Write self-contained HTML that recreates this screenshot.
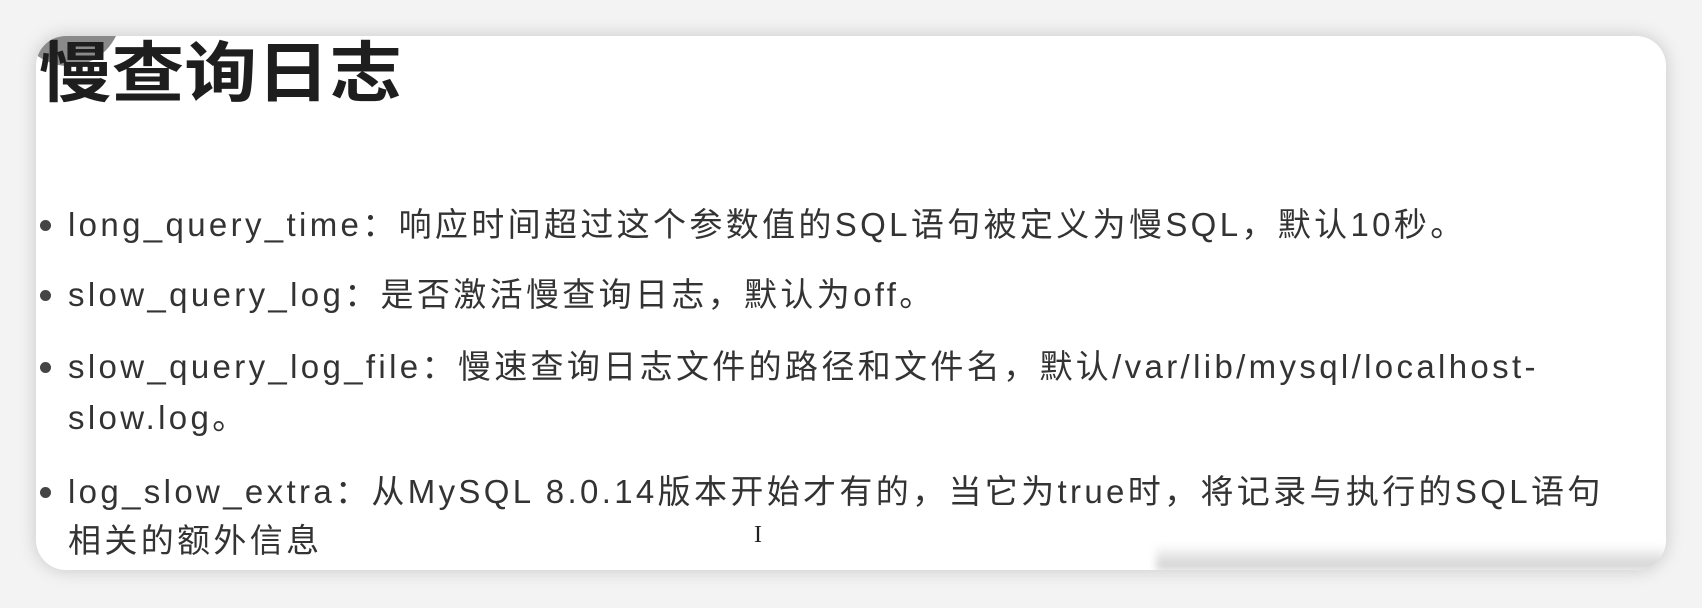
<!DOCTYPE html>
<html><head><meta charset="utf-8"><style>
html,body{margin:0;padding:0;}
body{width:1702px;height:608px;background:#f3f3f3;position:relative;overflow:hidden;font-family:"Liberation Sans","Noto Sans CJK SC",sans-serif;}
.card{position:absolute;left:36px;top:36px;width:1630px;height:534px;background:#fff;border-radius:30px;box-shadow:0 0 18px rgba(0,0,0,0.18);overflow:hidden;}
.title{position:absolute;left:3px;top:-3px;font-size:66px;font-weight:bold;color:#1e1e1e;line-height:80px;transform:scaleX(1.1);transform-origin:0 0;}
.l{position:absolute;left:32px;font-size:33px;letter-spacing:3.35px;color:#333;line-height:52px;white-space:nowrap;}
.b{position:absolute;left:4px;width:11px;height:11px;border-radius:50%;background:#444;}
.shade{position:absolute;left:1120px;right:0;bottom:0;height:26px;background:linear-gradient(to bottom,rgba(0,0,0,0),rgba(0,0,0,0.2));filter:blur(4px);}
.av{position:absolute;left:-20px;top:-75px;width:105px;height:105px;border-radius:50%;background:#8a8a8a;}
</style></head><body>
<div class="card">
<div class="av"></div>
<div class="title">慢查询日志</div>

<div class="b" style="top:184px"></div>
<div class="l" style="top:163px">long_query_time：响应时间超过这个参数值的SQL语句被定义为慢SQL，默认10秒。</div>

<div class="b" style="top:254px"></div>
<div class="l" style="top:233px">slow_query_log：是否激活慢查询日志，默认为off。</div>

<div class="b" style="top:326px"></div>
<div class="l" style="top:305px">slow_query_log_file：慢速查询日志文件的路径和文件名，默认/var/lib/mysql/localhost-</div>
<div class="l" style="top:356px">slow.log。</div>

<div class="b" style="top:451px"></div>
<div class="l" style="top:430px">log_slow_extra：从MySQL 8.0.14版本开始才有的，当它为true时，将记录与执行的SQL语句</div>
<div class="l" style="top:479px">相关的额外信息</div>
<div style="position:absolute;left:718px;top:486px;font-size:24px;color:#222;font-family:'Liberation Serif',serif;">I</div>
<div class="shade"></div>
</div>
</body></html>
